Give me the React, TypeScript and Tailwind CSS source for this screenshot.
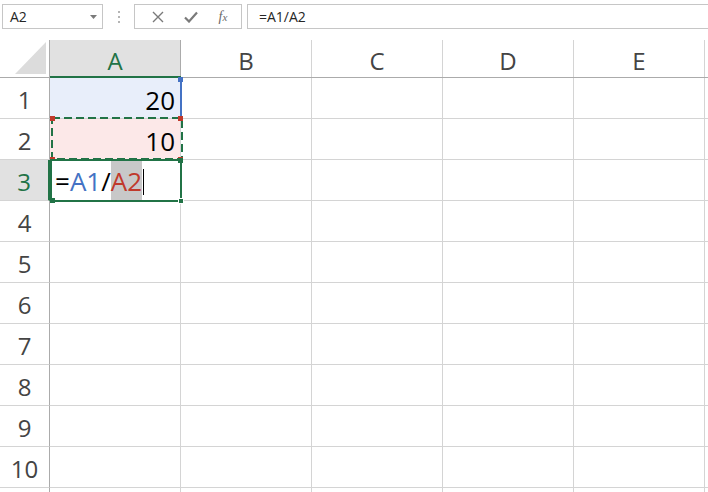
import { ReactNode } from 'react'

const cols = ['A', 'B', 'C', 'D', 'E']
const rows = [1, 2, 3, 4, 5, 6, 7, 8, 9, 10, 11]

function Corner({ className }: { className: string }) {
  return <div className={`absolute w-[5px] h-[5px] ${className}`} />
}

function CellA({ row }: { row: number }): ReactNode {
  if (row === 1) {
    return (
      <div className="relative w-[131px] shrink-0 h-full bg-[#e8eefa] border-r border-b border-[#d4d4d4] flex items-center justify-end pr-[5px] pt-[4px] text-[26px] text-black">
        20
        <div className="absolute top-0 right-[-2px] bottom-[-1px] w-[2px] bg-[#4472c4]" />
        <Corner className="top-[-1px] right-[-3px] bg-[#4472c4]" />
      </div>
    )
  }
  if (row === 2) {
    return (
      <div className="relative w-[131px] shrink-0 h-full bg-[#fce8e8] border-r border-b border-[#d4d4d4] flex items-center justify-end pr-[5px] pt-[4px] text-[26px] text-black">
        10
        {/* copy marquee */}
        <svg className="absolute top-[-2px] left-[1px]" width="132" height="43" viewBox="0 0 132 43">
          <rect x="1" y="1" width="130" height="41" fill="none" stroke="#217346" strokeWidth="2" strokeDasharray="8 4" />
        </svg>
        <Corner className="top-[-3px] left-0 bg-[#c0392b] w-[4px] h-[4px]" />
        <Corner className="top-[-3px] right-[-3px] bg-[#c0392b]" />
        <Corner className="bottom-[-3px] left-0 bg-[#c0392b] w-[4px] h-[4px]" />
        <Corner className="bottom-[-3px] right-[-3px] bg-[#c0392b]" />
      </div>
    )
  }
  if (row === 3) {
    return (
      <div className="relative w-[131px] shrink-0 h-full bg-white border-r border-b border-[#d4d4d4] flex items-stretch pl-[5px] text-[26px] text-black">
        <div className="flex items-stretch">
          <span className="flex items-center pt-[3px]">=</span>
          <span className="flex items-center pt-[3px] text-[#4472c4]">A1</span>
          <span className="flex items-center pt-[3px]">/</span>
          <span className="flex items-center pt-[3px] text-[#c0392b] bg-[#c8c8c8]">A2</span>
          <span className="self-center w-[1px] h-[26px] bg-black ml-[1px] mt-[3px]" />
        </div>
        <div className="absolute top-[-1px] left-0 right-[-2px] bottom-[-2px] border-2 border-[#217346]" />
        <Corner className="bottom-[-4px] right-[-4px] w-[6px] h-[6px] bg-[#217346] border border-white" />
        <Corner className="top-[-2px] right-[-3px] w-[4px] h-[4px] bg-[#217346]" />
        <Corner className="bottom-[-3px] left-0 w-[4px] h-[4px] bg-[#217346]" />
      </div>
    )
  }
  return <div className="w-[131px] shrink-0 h-full border-r border-b border-[#d4d4d4]" />
}

export default function App() {
  return (
    <div
      className="w-[708px] h-[492px] overflow-hidden bg-white select-none"
      style={{ fontFamily: '"Open Sans", "Liberation Sans", sans-serif' }}
    >
      {/* Formula bar */}
      <div className="h-[40px] flex items-start pt-[4px] pl-[2px]">
        <div className="w-[101px] h-[25px] border border-[#c6c6c6] flex items-center justify-between pl-[7px] pr-[5px] text-[14px] text-[#262626]">
          <span>A2</span>
          <svg width="7" height="4" viewBox="0 0 7 4">
            <path d="M0 0 L7 0 L3.5 4 Z" fill="#7a7a7a" />
          </svg>
        </div>
        <div className="w-[31px] h-[25px] flex flex-col items-center justify-center gap-[3px]">
          <div className="w-[2px] h-[2px] bg-[#b5b5b5]" />
          <div className="w-[2px] h-[2px] bg-[#b5b5b5]" />
          <div className="w-[2px] h-[2px] bg-[#b5b5b5]" />
        </div>
        <div className="w-[108px] h-[25px] border border-[#c6c6c6] flex items-center text-[#7a7a7a]">
          <div className="w-[40px] flex justify-center pl-[6px]">
            <svg width="12" height="12" viewBox="0 0 12 12">
              <path d="M1 1 L11 11 M11 1 L1 11" stroke="#7a7a7a" strokeWidth="1.4" />
            </svg>
          </div>
          <div className="w-[32px] flex justify-center">
            <svg width="14" height="12" viewBox="0 0 14 12">
              <path d="M1 6.5 L5 10.5 L13 1.5" stroke="#7a7a7a" strokeWidth="2.2" fill="none" />
            </svg>
          </div>
          <div
            className="w-[32px] flex justify-center italic text-[14px] text-[#6a6a6a]"
            style={{ fontFamily: '"Liberation Serif", serif' }}
          >
            f<span className="text-[11px] mt-[3px]">x</span>
          </div>
        </div>
        <div className="flex-1 h-[25px] ml-[5px] border-t border-b border-l border-[#c6c6c6] flex items-center pl-[11px] text-[14px] text-[#262626]">
          =A1/A2
        </div>
      </div>

      {/* Column headers */}
      <div className="h-[38px] flex border-b border-[#ababab]">
        <div className="w-[50px] shrink-0 h-full border-r border-[#ababab] flex items-end justify-end pr-[3px] pb-[3px]">
          <svg width="31" height="32" viewBox="0 0 31 32">
            <path d="M31 0 L31 32 L0 32 Z" fill="#dcdcdc" />
          </svg>
        </div>
        {cols.map((c) => (
          <div
            key={c}
            className={
              c === 'A'
                ? 'relative w-[131px] shrink-0 h-full bg-[#e1e1e1] border-r border-[#ababab] flex items-center justify-center pt-[4px] text-[24px] text-[#217346]'
                : 'w-[131px] shrink-0 h-full border-r border-[#d4d4d4] flex items-center justify-center pt-[4px] text-[24px] text-[#444]'
            }
          >
            {c}
            {c === 'A' && <div className="absolute left-0 right-[-1px] bottom-[-1px] h-[2px] bg-[#217346]" />}
          </div>
        ))}
        <div className="flex-1" />
      </div>

      {/* Rows */}
      {rows.map((r) => (
        <div key={r} className="h-[41px] flex">
          <div
            className={
              r === 3
                ? 'w-[50px] shrink-0 h-full bg-[#e1e1e1] border-r-2 border-b border-r-[#217346] border-b-[#d4d4d4] flex items-center justify-center pt-[3px] text-[24px] text-[#217346]'
                : 'w-[50px] shrink-0 h-full border-r border-b border-r-[#ababab] border-b-[#d4d4d4] flex items-center justify-center pt-[3px] text-[24px] text-[#444]'
            }
          >
            {r <= 10 ? r : ''}
          </div>
          <CellA row={r} />
          {cols.slice(1).map((c) => (
            <div key={c} className="w-[131px] shrink-0 h-full border-r border-b border-[#d4d4d4]" />
          ))}
          <div className="flex-1 border-b border-[#d4d4d4]" />
        </div>
      ))}
    </div>
  )
}
